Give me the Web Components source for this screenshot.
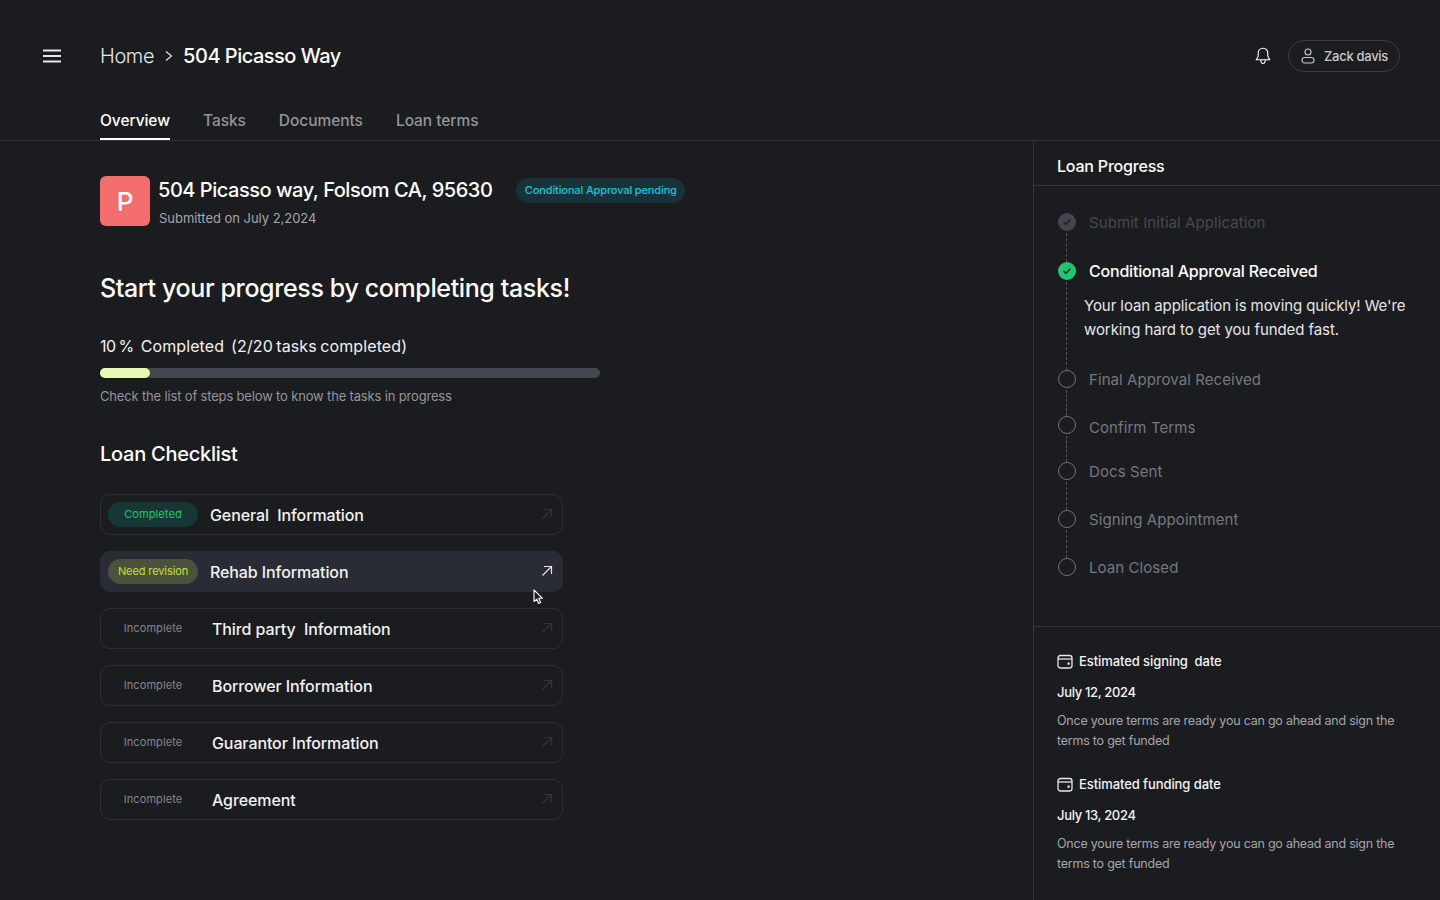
<!DOCTYPE html>
<html lang="en">
<head>
<meta charset="utf-8">
<title>504 Picasso Way</title>
<style>
  html, body { margin: 0; height: 100%; background: #1b1c20; }
  body { font-family: "Inter", "Liberation Sans", sans-serif; color: #fff; overflow: hidden; }
  loan-page { display: block; }
</style>
</head>
<body>
<loan-page>
  <top-bar></top-bar>
  <main-split>
    <div slot="left">
      <loan-summary></loan-summary>
      <task-progress></task-progress>
      <loan-checklist>
        <check-item status="completed" label="Completed" title="General  Information"></check-item>
        <check-item status="revision" label="Need revision" title="Rehab Information" active></check-item>
        <check-item status="incomplete" label="Incomplete" title="Third party  Information"></check-item>
        <check-item status="incomplete" label="Incomplete" title="Borrower Information"></check-item>
        <check-item status="incomplete" label="Incomplete" title="Guarantor Information"></check-item>
        <check-item status="incomplete" label="Incomplete" title="Agreement"></check-item>
      </loan-checklist>
    </div>
    <div slot="right">
      <loan-steps></loan-steps>
      <date-card title="Estimated signing  date" date="July 12, 2024"></date-card>
      <date-card title="Estimated funding date" date="July 13, 2024"></date-card>
    </div>
  </main-split>
</loan-page>

<script>
const ICONS = {
    menu: '<svg width="18" height="14" viewBox="0 0 18 14" fill="none" stroke="#e8e8ea" stroke-width="2"><path d="M0 1.5h18M0 7h18M0 12.5h18"/></svg>',
    bell: '<svg width="16" height="18" viewBox="0 0 16 18" fill="none" stroke="#fff" stroke-width="1.1" stroke-linejoin="round"><path d="M8 1.200c-3 0-4.800 2.200-4.800 5v2.600c0 1.400-1 2.600-2 3.900h13.600c-1-1.300-2-2.500-2-3.900V6.200c0-2.800-1.800-5-4.800-5z"/><path d="M5.800 13c0 2 .8 3.500 2.200 3.500s2.200-1.500 2.200-3.500"/></svg>',
    user: '<svg width="14" height="16" viewBox="0 0 14 16" fill="none" stroke="#c9c9cd" stroke-width="1.1"><circle cx="7" cy="4" r="3"/><rect x="1" y="9.500" width="12" height="5.500" rx="2.750"/></svg>',
    arrow: '<svg width="12" height="12" viewBox="0 0 12 12" fill="none" stroke="currentColor" stroke-width="1.200"><path d="M1.500 10.500L10.500 1.500M3 1.500h7.500V9"/></svg>',
    check: '<svg width="10" height="8" viewBox="0 0 10 8" fill="none" stroke="currentColor" stroke-width="1.300"><path d="M1.500 4l2.300 2.300L8.500 1.500"/></svg>',
    calendar: '<svg width="16" height="15" viewBox="0 0 16 15" fill="none" stroke="#e8e8ea" stroke-width="1.300"><rect x="1" y="1.500" width="14" height="12.500" rx="2.500"/><path d="M1 5h14"/><rect x="10.500" y="8.500" width="2.200" height="2.200" fill="#e8e8ea" stroke="none"/></svg>'
};

class TopBar extends HTMLElement {
    constructor() {
        super();
        this.attachShadow({ mode: 'open' });
    }

    connectedCallback() {
        this.shadowRoot.innerHTML = `
            <style>
                :host { display: block; border-bottom: 1px solid #33343b; height: 141px; box-sizing: border-box; }
                .bar { display: flex; align-items: center; height: 112px; padding: 0 40px 0 43px; }
                .menu { display: flex; width: 57px; }
                .crumbs { display: flex; align-items: center; font-size: 20px; flex: 1; }
                .home { color: #e6e6e8; font-weight: 300; letter-spacing: -0.4px; }
                .sep { margin: 0 10px 0 11px; display: flex; }
                .here { font-weight: 500; letter-spacing: -0.5px; }
                .bell { display: flex; margin-right: 17px; }
                .user { display: flex; align-items: center; gap: 9px; height: 32px; box-sizing: border-box; padding: 0 11px 0 12px;
                        border: 1px solid #3b3c44; border-radius: 16px; font-size: 13px; font-weight: 500; color: #c9c9cd; letter-spacing: -0.3px; }
                nav { display: flex; gap: 33px; padding-left: 100px; height: 28px; margin-top: -4px; font-size: 15.500px; font-weight: 500; color: #94949a; }
                nav span { box-sizing: border-box; height: 32px; line-height: 25px; letter-spacing: -0.05px; }
                nav .on { color: #fff; border-bottom: 2px solid #fff; }
            </style>
            <div class="bar">
                <span class="menu">${ICONS.menu}</span>
                <div class="crumbs">
                    <span class="home">Home</span>
                    <span class="sep"><svg width="8" height="12" viewBox="0 0 8 12" fill="none" stroke="#e6e6e8" stroke-width="1.200"><path d="M1 1.500L6.500 6 1 10.500"/></svg></span>
                    <span class="here">504 Picasso Way</span>
                </div>
                <span class="bell">${ICONS.bell}</span>
                <span class="user">${ICONS.user}Zack davis</span>
            </div>
            <nav>
                <span class="on">Overview</span><span>Tasks</span><span>Documents</span><span>Loan terms</span>
            </nav>
        `;
    }
}

class MainSplit extends HTMLElement {
    constructor() {
        super();
        this.attachShadow({ mode: 'open' });
        this.shadowRoot.innerHTML = `
            <style>
                :host { display: grid; grid-template-columns: 1033px 407px; height: 759px; }
                .left { padding: 35px 0 0 100px; }
                .right { border-left: 1px solid #33343b; }
            </style>
            <div class="left"><slot name="left"></slot></div>
            <div class="right"><slot name="right"></slot></div>
        `;
    }
}

class LoanSummary extends HTMLElement {
    constructor() {
        super();
        this.attachShadow({ mode: 'open' });
        this.shadowRoot.innerHTML = `
            <style>
                :host { display: flex; gap: 8px; height: 50px; }
                .logo { width: 50px; height: 50px; border-radius: 6px; background: #f56e6e; display: grid; place-items: center; font-size: 26px; font-weight: 500; }
                .line { display: flex; align-items: center; height: 28px; }
                h2 { margin: 0; font-size: 20px; font-weight: 500; letter-spacing: -0.470px; white-space: nowrap; }
                .pill { margin-left: 24px; height: 25px; line-height: 25px; padding: 0 8.500px; border-radius: 13px; background: #173238; color: #11c5dc; font-size: 11px; font-weight: 500; letter-spacing: -0.130px; }
                p { margin: 6px 0 0 1px; font-size: 13px; color: #a5a5aa; letter-spacing: -0.030px; }
            </style>
            <div class="logo">P</div>
            <div>
                <div class="line"><h2>504 Picasso way, Folsom CA, 95630</h2><span class="pill">Conditional Approval pending</span></div>
                <p>Submitted on July 2,2024</p>
            </div>
        `;
    }
}

class TaskProgress extends HTMLElement {
    constructor() {
        super();
        this.attachShadow({ mode: 'open' });
        this.shadowRoot.innerHTML = `
            <style>
                :host { display: block; }
                h1 { margin: 44px 0 0; font-size: 25px; line-height: 36px; font-weight: 500; letter-spacing: -0.375px; }
                .done { margin-top: 28px; font-size: 16px; line-height: 24px; color: #f2f2f3; white-space: pre; letter-spacing: 0.100px; word-spacing: -1.100px; }
                .done span { letter-spacing: -0.500px; }
                .track { width: 500px; height: 10px; margin-top: 10px; border-radius: 5px; background: #44464f; }
                .fill { width: 50px; height: 10px; border-radius: 5px; background: #e8fab4; }
                p { margin: 9px 0 0; font-size: 13px; line-height: 18px; color: #94949a; letter-spacing: -0.165px; }
            </style>
            <h1>Start your progress by completing tasks!</h1>
            <div class="done"><span>10 %</span>  Completed  (2/20 tasks completed)</div>
            <div class="track"><div class="fill"></div></div>
            <p>Check the list of steps below to know the tasks in progress</p>
        `;
    }
}

class LoanChecklist extends HTMLElement {
    constructor() {
        super();
        this.attachShadow({ mode: 'open' });
        this.shadowRoot.innerHTML = `
            <style>
                :host { display: block; width: 463px; }
                h3 { margin: 35px 0 26px; font-size: 20px; line-height: 28px; font-weight: 500; letter-spacing: -0.260px; }
                .items { display: flex; flex-direction: column; gap: 16px; }
            </style>
            <h3>Loan Checklist</h3>
            <div class="items"><slot></slot></div>
        `;
    }
}

class CheckItem extends HTMLElement {
    constructor() {
        super();
        this.attachShadow({ mode: 'open' });
    }

    connectedCallback() {
        const status = this.getAttribute('status');
        const gap = status === 'incomplete' ? 14 : 12;
        this.shadowRoot.innerHTML = `
            <style>
                :host { display: flex; align-items: center; height: 41px; box-sizing: border-box; padding: 0 9px 0 7px;
                        border: 1px solid #2e2f36; border-radius: 10px; color: #33343a; }
                :host([active]) { background: #2a2c35; border-color: #2a2c35; color: #e6e6e8; }
                .pill { width: 90px; height: 25px; line-height: 25px; text-align: center; border-radius: 13px; font-size: 11px; letter-spacing: 0.100px; flex: none; }
                .completed { background: #163735; color: #1fc66f; }
                .revision { background: #4c513d; color: #c3e030; letter-spacing: -0.100px; }
                .incomplete { color: #85858b; }
                .title { flex: 1; margin-left: ${gap}px; font-size: 16px; font-weight: 500; color: #f2f2f3; white-space: pre; letter-spacing: -0.100px; }
                .go { display: flex; margin-bottom: 2px; }
            </style>
            <span class="pill ${status}">${this.getAttribute('label')}</span>
            <span class="title">${this.getAttribute('title')}</span>
            <span class="go">${ICONS.arrow}</span>
        `;
    }
}

class LoanSteps extends HTMLElement {
    constructor() {
        super();
        this.attachShadow({ mode: 'open' });
        this.shadowRoot.innerHTML = `
            <style>
                :host { display: block; height: 486px; border-bottom: 1px solid #33343b; box-sizing: border-box; }
                h4 { margin: 0; height: 45px; box-sizing: border-box; padding: 15px 0 0 23px; font-size: 16px; line-height: 21px; font-weight: 500; letter-spacing: -0.2px; border-bottom: 1px solid #33343b; }
                .list { padding: 27px 0 0 24px; }
                .row { display: grid; grid-template-columns: 18px 1fr; align-content: start; column-gap: 13px; position: relative; font-size: 15px; line-height: 20px; color: #77777d; letter-spacing: 0.080px; }
                .row > i { width: 18px; height: 18px; box-sizing: border-box; border-radius: 50%; border: 1.500px solid #6f7076; display: grid; place-items: center; font-style: normal; }
                .row.old { color: #47484f; }
                .row.old > i { background: #44464f; border: 0; color: #1b1c20; }
                .row.now { color: #fff; font-size: 16px; line-height: 18px; font-weight: 500; letter-spacing: -0.200px; }
                .row.now > i { background: #1fc66f; border: 0; color: #12251b; }
                .row::after { content: ""; position: absolute; left: 8px; top: 20px; bottom: 0; border-left: 1px dashed #55565c; }
                .row:last-child::after { display: none; }
                .msg { grid-column: 1 / 3; margin: 14px 0 0 26px; width: 330px; font-size: 15px; line-height: 24px; font-weight: 400; letter-spacing: -0.080px; color: #e6e6e8; }
            </style>
            <h4>Loan Progress</h4>
            <div class="list">
                <div class="row old" style="height:49px"><i>${ICONS.check}</i><span>Submit Initial Application</span></div>
                <div class="row now" style="height:108px"><i>${ICONS.check}</i><span>Conditional Approval Received</span>
                    <div class="msg">Your loan application is moving quickly! We're working hard to get you funded fast.</div></div>
                <div class="row" style="height:46px"><i></i><span>Final Approval Received</span></div>
                <div class="row" style="height:46px"><i></i><span style="margin-top:2px">Confirm Terms</span></div>
                <div class="row" style="height:48px"><i></i><span>Docs Sent</span></div>
                <div class="row" style="height:48px"><i></i><span>Signing Appointment</span></div>
                <div class="row"><i></i><span>Loan Closed</span></div>
            </div>
        `;
    }
}

class DateCard extends HTMLElement {
    constructor() {
        super();
        this.attachShadow({ mode: 'open' });
    }

    connectedCallback() {
        this.shadowRoot.innerHTML = `
            <style>
                :host { display: block; height: 123px; box-sizing: border-box; padding: 25px 24px 0 23px; }
                .head { display: flex; align-items: center; gap: 6px; height: 18px; font-size: 13px; font-weight: 500; color: #f2f2f3; white-space: pre; letter-spacing: -0.080px; }
                .date { margin-top: 13px; font-size: 13px; line-height: 18px; font-weight: 500; color: #f2f2f3; letter-spacing: -0.330px; }
                p { margin: 10px 0 0; font-size: 12.500px; line-height: 20px; color: #a5a5aa; letter-spacing: -0.230px; }
            </style>
            <div class="head">${ICONS.calendar}${this.getAttribute('title')}</div>
            <div class="date">${this.getAttribute('date')}</div>
            <p>Once youre terms are ready you can go ahead and sign the terms to get funded</p>
        `;
    }
}

class MouseCursor extends HTMLElement {
    constructor() {
        super();
        this.attachShadow({ mode: 'open' });
        this.shadowRoot.innerHTML = `
            <style>:host { position: absolute; left: 533px; top: 589px; display: block; width: 11px; height: 16px; }</style>
            <svg width="11" height="16" viewBox="0 0 11 16"><path d="M1 1v11.500l2.800-2.400 1.800 4.400 2-0.900-1.800-4.300H9.500z" fill="#1b1c20" stroke="#fff" stroke-width="1.100" stroke-linejoin="round"/></svg>
        `;
    }
}

customElements.define('top-bar', TopBar);
customElements.define('main-split', MainSplit);
customElements.define('loan-summary', LoanSummary);
customElements.define('task-progress', TaskProgress);
customElements.define('loan-checklist', LoanChecklist);
customElements.define('check-item', CheckItem);
customElements.define('loan-steps', LoanSteps);
customElements.define('date-card', DateCard);
customElements.define('mouse-cursor', MouseCursor);
document.body.appendChild(document.createElement('mouse-cursor'));
</script>
</body>
</html>
